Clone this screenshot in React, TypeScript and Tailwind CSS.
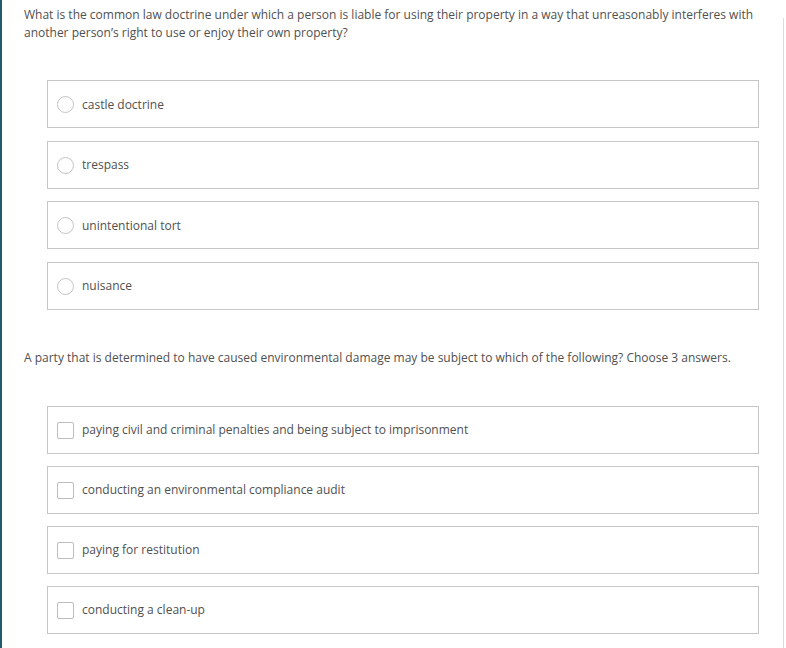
import React from "react";

const q1Options = ["castle doctrine", "trespass", "unintentional tort", "nuisance"];
const q2Options = [
  "paying civil and criminal penalties and being subject to imprisonment",
  "conducting an environmental compliance audit",
  "paying for restitution",
  "conducting a clean-up",
];

function Option({ label, kind }: { label: string; kind: "radio" | "check" }) {
  return (
    <div className="flex h-[48px] items-center border border-[#c6c6c6] bg-white pl-[9px] pt-[1px]">
      {kind === "radio" ? (
        <span className="h-[17px] w-[17px] shrink-0 rounded-full border border-[#c4c4c4] bg-white" />
      ) : (
        <span className="h-[17px] w-[17px] shrink-0 rounded-[2px] border border-[#bdbdbd] bg-white" />
      )}
      <span className="ml-[8px] text-[12px] text-[#505050]">{label}</span>
    </div>
  );
}

export default function App() {
  return (
    <div
      className="flex h-[648px] w-[786px] overflow-hidden bg-white"
      style={{ fontFamily: '"Open Sans", "Liberation Sans", sans-serif' }}
    >
      <div className="w-[2px] shrink-0 bg-[#1f5b68]" />
      <div className="flex-1 pl-[22px] pr-[24px] pt-[6px]">
        <p className="text-[12px] leading-[18px] text-[#505050]">
          What is the common law doctrine under which a person is liable for using their property in a way that
          unreasonably interferes with another person’s right to use or enjoy their own property?
        </p>
        <div className="ml-[23px] mt-[38px] flex flex-col gap-[12.5px]">
          {q1Options.map((o) => (
            <Option key={o} label={o} kind="radio" />
          ))}
        </div>
        <p className="mt-[39px] text-[12px] leading-[18px] text-[#505050]">
          A party that is determined to have caused environmental damage may be subject to which of the following?
          Choose 3 answers.
        </p>
        <div className="ml-[23px] mt-[39px] flex flex-col gap-[12px]">
          {q2Options.map((o) => (
            <Option key={o} label={o} kind="check" />
          ))}
        </div>
      </div>
      <div className="flex w-[3px] shrink-0 flex-col">
        <div className="h-[18px]" />
        <div className="w-[1px] flex-1 bg-[#dcdcdc]" />
      </div>
    </div>
  );
}
